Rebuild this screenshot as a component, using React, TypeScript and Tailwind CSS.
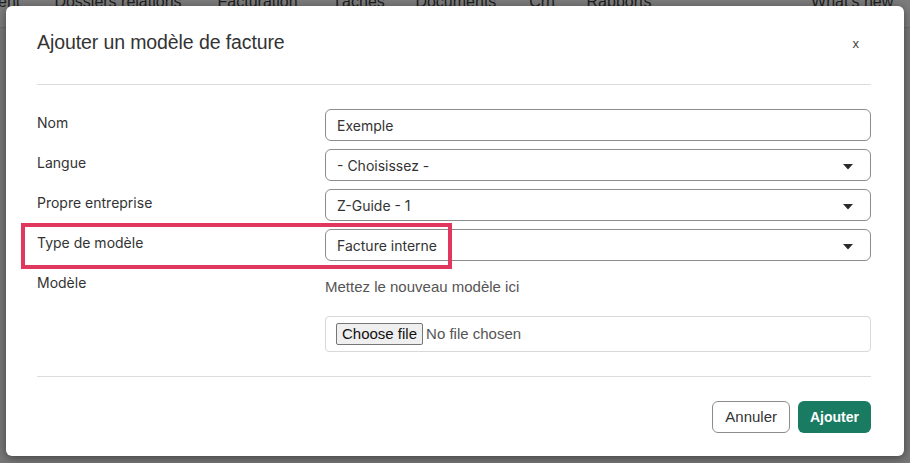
const navItems = [
  { label: "ent", w: "w-[57px]" },
  { label: "Dossiers relations", w: "w-[165px]" },
  { label: "Facturation", w: "w-[116px]" },
  { label: "Tâches", w: "w-[84px]" },
  { label: "Documents", w: "w-[115px]" },
  { label: "Crh", w: "w-[58px]" },
  { label: "Rapports", w: "w-[227px]" },
  { label: "What's new", w: "w-[100px]" },
];

const Caret = () => (
  <svg width="10" height="6" viewBox="0 0 10 6" className="mr-[17px] mt-[3px]">
    <path d="M0 0h10L5 5.5z" fill="#2b2b2b" />
  </svg>
);

const Field = ({ value, select }: { value: string; select?: boolean }) => (
  <div className="h-[32px] border border-[#8c8c8c] rounded-[6px] pl-[11px] flex items-center justify-between text-[14px] text-[#333] font-['Inter',sans-serif]">
    <span>{value}</span>
    {select && <Caret />}
  </div>
);

const Label = ({ children }: { children: React.ReactNode }) => (
  <div className="pt-[4px] leading-[20px] text-[14px] text-[#333] font-['Inter',sans-serif]">{children}</div>
);

export default function App() {
  return (
    <div className="relative w-[910px] h-[463px] overflow-hidden bg-[#777777] font-['Liberation_Sans',Arial,sans-serif]">
      {/* page behind the overlay */}
      <div className="h-[36px] bg-[#7c7c7c] border-b border-[#6c6c6c]">
        <div className="flex -mt-[8px] -ml-[2px] h-[20px] leading-[20px] text-[16px] text-[#1f1f1f] whitespace-nowrap">
          {navItems.map((n) => (
            <span key={n.label} className={n.w}>
              {n.label}
            </span>
          ))}
        </div>
      </div>

      {/* Modal */}
      <div className="absolute left-[6px] top-[6px] w-[898px] h-[450px] bg-white rounded-[6px] shadow-[0_2px_10px_rgba(0,0,0,0.45)] pl-[31px] pr-[33px] flex flex-col">
        <div className="h-[79px] pb-[4px] flex items-center justify-between border-b border-[#dcdcdc]">
          <h2 className="text-[19.5px] text-[#333] tracking-[-0.1px]">Ajouter un modèle de facture</h2>
          <span className="mr-[12px] text-[13px] leading-none text-[#444]">x</span>
        </div>

        <div className="pt-[24px] pb-[24px] grid grid-cols-[288px_1fr] gap-y-[8px]">
          <Label>Nom</Label>
          <Field value="Exemple" />
          <Label>Langue</Label>
          <Field value="- Choisissez -" select />
          <Label>Propre entreprise</Label>
          <Field value="Z-Guide - 1" select />
          <Label>Type de modèle</Label>
          <Field value="Facture interne" select />
          <Label>Modèle</Label>
          <div>
            <div className="pt-[8px] leading-[20px] text-[15px] text-[#555]">Mettez le nouveau modèle ici</div>
            <div className="mt-[19px] h-[36px] border border-[#d8d8d8] rounded-[4px] px-[10px] flex items-center text-[15px]">
              <span className="h-[22px] px-[5px] flex items-center border border-[#767676] bg-[#efefef] rounded-[2px] text-[#111]">
                Choose file
              </span>
              <span className="ml-[3px] text-[#555]">No file chosen</span>
            </div>
          </div>
        </div>

        <div className="border-t border-[#dcdcdc] pt-[24px] flex justify-end gap-[8px]">
          <button className="h-[32px] px-[12px] border border-[#8c8c8c] rounded-[6px] text-[15px] text-[#333]">
            Annuler
          </button>
          <button className="h-[32px] px-[12px] rounded-[6px] bg-[#1a7b63] text-[14px] font-bold text-white">
            Ajouter
          </button>
        </div>
      </div>

      {/* annotation */}
      <div className="absolute left-[21px] top-[223px] w-[431px] h-[46px] border-4 border-[#e0375f]" />
    </div>
  );
}
